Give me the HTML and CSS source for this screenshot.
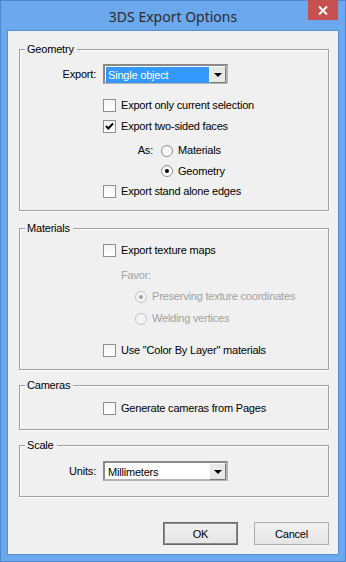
FILE: index.html
```html
<!DOCTYPE html>
<html lang="en">
<head>
  <meta charset="UTF-8">
  <title>3DS Export Options</title>
  <link rel="stylesheet" href="styles.css">
</head>
<body>

  <div class="window">
    <div class="titlebar">
      <span class="title">3DS Export Options</span>
      <button class="close" aria-label="Close">
        <svg width="10" height="9" viewBox="0 0 10 9">
          <path d="M1 0.5 L9 8.5 M9 0.5 L1 8.5" stroke="#fff" stroke-width="2" fill="none"/>
        </svg>
      </button>
    </div>

    <div class="client">

      <div class="group geometry">
        <span class="group-title">Geometry</span>
        <div class="combo-row first-combo">
          <span class="combo-label">Export:</span>
          <div class="combo focused">
            <span class="combo-value">Single object</span>
            <span class="combo-btn"><span class="arrow"></span></span>
          </div>
        </div>
        <div class="check-row mt11">
          <span class="check"></span>
          <span>Export only current selection</span>
        </div>
        <div class="check-row">
          <span class="check checked">
            <svg width="11" height="11" viewBox="0 0 11 11">
              <polyline points="2,5 4.3,7.5 9,2.5" stroke="#000" stroke-width="1.9" fill="none"/>
            </svg>
          </span>
          <span>Export two-sided faces</span>
        </div>
        <div class="radio-row mt3">
          <span class="radio-label">As:</span>
          <span class="radio"></span>
          <span>Materials</span>
        </div>
        <div class="radio-row short">
          <span class="radio-label"></span>
          <span class="radio selected"></span>
          <span>Geometry</span>
        </div>
        <div class="check-row">
          <span class="check"></span>
          <span>Export stand alone edges</span>
        </div>
      </div>

      <div class="group materials">
        <span class="group-title">Materials</span>
        <div class="check-row mt5">
          <span class="check"></span>
          <span>Export texture maps</span>
        </div>
        <div class="favor-row mt4 disabled">Favor:</div>
        <div class="sub-radio-row disabled">
          <span class="radio selected"></span>
          <span>Preserving texture coordinates</span>
        </div>
        <div class="sub-radio-row mt1 disabled">
          <span class="radio"></span>
          <span>Welding vertices</span>
        </div>
        <div class="check-row mt11">
          <span class="check"></span>
          <span>Use "Color By Layer" materials</span>
        </div>
      </div>

      <div class="group cameras">
        <span class="group-title">Cameras</span>
        <div class="check-row mt6">
          <span class="check"></span>
          <span>Generate cameras from Pages</span>
        </div>
      </div>

      <div class="group scale">
        <span class="group-title">Scale</span>
        <div class="combo-row mt9">
          <span class="combo-label">Units:</span>
          <div class="combo">
            <span class="combo-value">Millimeters</span>
            <span class="combo-btn"><span class="arrow"></span></span>
          </div>
        </div>
      </div>

      <div class="buttons">
        <button class="btn default">OK</button>
        <button class="btn">Cancel</button>
      </div>

    </div>
  </div>

</body>
</html>
```

FILE: styles.css
```css
* {
  box-sizing: border-box;
}

body {
  margin: 0;
  font-family: "Liberation Sans", Arial, sans-serif;
  font-size: 11px;
  letter-spacing: -0.2px;
  color: #000;
}

.window {
  position: relative;
  width: 346px;
  height: 562px;
  border: 1px solid #4f87cc;
  background-color: #6ba8ee;
  padding: 0 6px 6px;
}

.titlebar {
  height: 29px;
  display: flex;
  align-items: center;
  justify-content: center;
}

.title {
  font-family: "Noto Sans", sans-serif;
  font-size: 14px;
  letter-spacing: 0;
  color: #2b2b2b;
  padding-top: 1px;
}

.close {
  position: absolute;
  top: -1px;
  right: 7px;
  width: 30px;
  height: 20px;
  border: none;
  padding: 0;
  background-color: #c75050;
  display: flex;
  align-items: center;
  justify-content: center;
}

.client {
  height: 525px;
  border: 1px solid #5a8ed3;
  background-color: #f0f0f0;
  overflow: hidden;
}

/* group boxes */
.group {
  margin: 17px 9px 0 11px;
  border: 1px solid #a0a0a0;
  box-shadow: 1px 1px 0 #fff, inset 1px 1px 0 #fff;
}

.geometry {
  margin-top: 18px;
  padding-bottom: 8px;
}

.materials {
  padding-bottom: 8px;
}

.cameras {
  margin-top: 15px;
  padding-bottom: 10px;
}

.scale {
  margin-top: 15px;
  padding-bottom: 15px;
}

.group-title {
  display: block;
  width: fit-content;
  height: 13px;
  line-height: 13px;
  margin: -7px 0 0 5px;
  padding: 0 3px 0 2px;
  background-color: #f0f0f0;
}

.mt1 { margin-top: 1px; }
.mt3 { margin-top: 3px; }
.mt4 { margin-top: 4px; }
.mt5 { margin-top: 5px; }
.mt6 { margin-top: 6px; }
.mt9 { margin-top: 9px; }
.mt11 { margin-top: 11px; }

/* rows */
.check-row,
.radio-row,
.sub-radio-row,
.favor-row {
  height: 21px;
  display: flex;
  align-items: center;
  line-height: 13px;
}

.check-row {
  padding-left: 83px;
}

.radio-row.short {
  height: 20px;
}

.radio-label {
  width: 141px;
  padding-right: 8px;
  text-align: right;
}

.favor-row {
  padding-left: 101px;
}

.sub-radio-row {
  padding-left: 115px;
}

.disabled {
  color: #a0a0a0;
}

/* checkbox */
.check {
  width: 13px;
  height: 13px;
  margin-right: 5px;
  border: 1px solid #8f8f8f;
  background: linear-gradient(#f4f4f4, #fff);
  display: flex;
  align-items: center;
  justify-content: center;
  flex-shrink: 0;
}

/* radio */
.radio {
  width: 12px;
  height: 12px;
  margin-right: 5px;
  border: 1px solid #8f8f8f;
  border-radius: 50%;
  background: linear-gradient(#f2f2f2, #fff);
  display: flex;
  align-items: center;
  justify-content: center;
  flex-shrink: 0;
}

.radio.selected::after {
  content: "";
  width: 4px;
  height: 4px;
  border-radius: 50%;
  background-color: #000;
}

.disabled .radio {
  border-color: #c2c2c2;
  background: #f4f4f4;
}

.disabled .radio.selected::after {
  background-color: #a0a0a0;
}

/* combo box */
.combo-row {
  height: 20px;
  display: flex;
  align-items: center;
}

.first-combo {
  margin-top: 8px;
}

.combo-label {
  width: 83px;
  padding-right: 7px;
  text-align: right;
}

.combo {
  width: 125px;
  height: 20px;
  display: flex;
  border: 2px solid;
  border-color: #8a8a8a #b4b4b4 #b4b4b4 #8a8a8a;
  background-color: #fff;
  padding: 1px 0 0 1px;
}

.combo-value {
  flex: 1;
  height: 16px;
  line-height: 16px;
  padding-left: 2px;
  color: #000;
  white-space: nowrap;
}

.combo.focused .combo-value {
  background-color: #3399ff;
  color: #fff;
}

.combo-btn {
  width: 17px;
  height: 17px;
  margin-top: -1px;
  border: 1px solid;
  border-color: #f8f8f8 #7a7a7a #7a7a7a #f8f8f8;
  background-color: #e8e8e8;
  display: flex;
  align-items: center;
  justify-content: center;
}

.arrow {
  width: 0;
  height: 0;
  border-left: 4px solid transparent;
  border-right: 4px solid transparent;
  border-top: 4px solid #000;
}

/* dialog buttons */
.buttons {
  display: flex;
  justify-content: flex-end;
  gap: 16px;
  margin-top: 25px;
  padding-right: 9px;
}

.btn {
  width: 75px;
  height: 23px;
  padding: 0;
  border: 1px solid #adadad;
  background: linear-gradient(#f0f0f0, #e5e5e5);
  font-family: "Liberation Sans", Arial, sans-serif;
  font-size: 11px;
  letter-spacing: -0.2px;
  color: #000;
}

.btn.default {
  border-color: #6b6b6b;
  box-shadow: inset 0 0 0 1px #8c8c8c;
}
```
